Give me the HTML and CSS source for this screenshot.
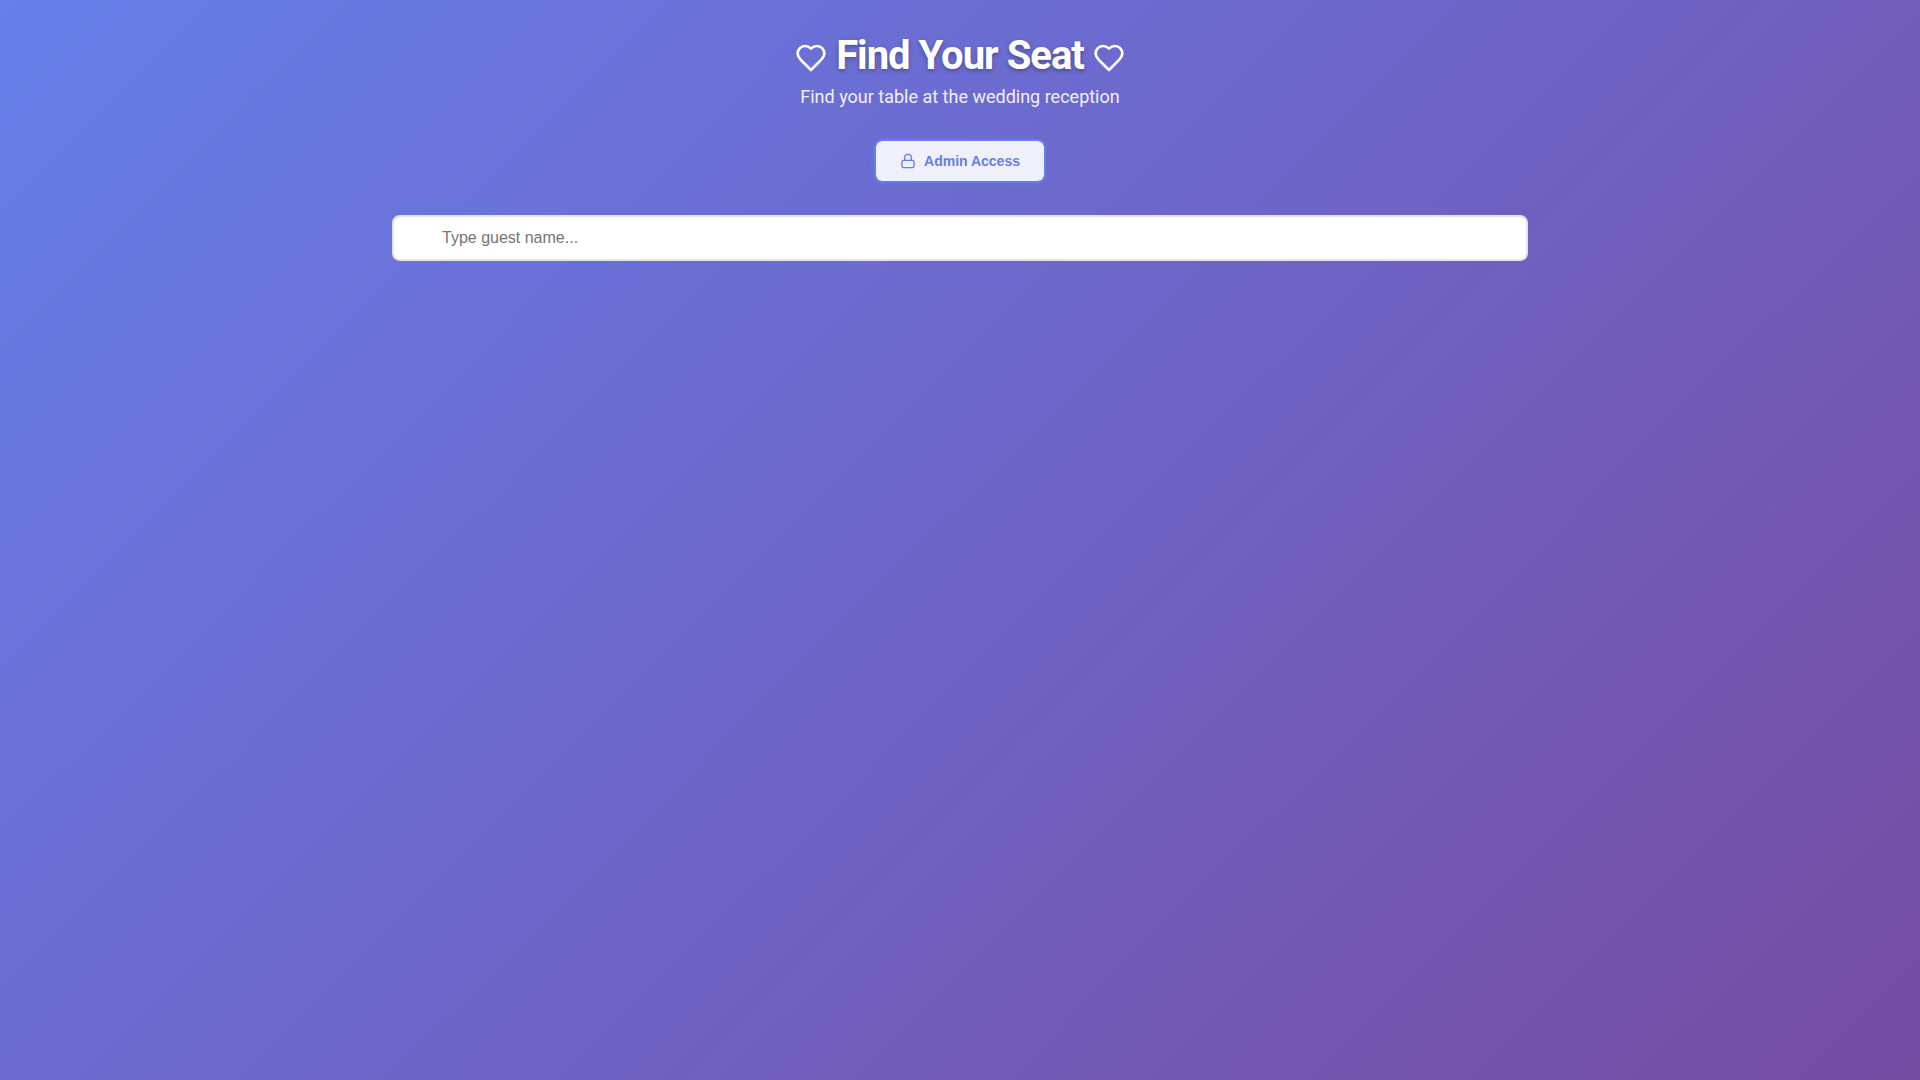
FILE: index.html
```html
<!DOCTYPE html>
<html lang="en">
<head>
<meta charset="utf-8">
<meta name="viewport" content="width=device-width, initial-scale=1">
<title>Find Your Seat</title>
<link rel="stylesheet" href="styles.css">
</head>
<body>
<main class="container">
  <header class="header">
    <h1 class="title">
      <svg class="heart" viewBox="0 0 24 24" aria-hidden="true"><path d="M19 14c1.49-1.46 3-3.21 3-5.5A5.5 5.5 0 0 0 16.5 3c-1.76 0-3 .5-4.5 2-1.5-1.5-2.74-2-4.5-2A5.5 5.5 0 0 0 2 8.5c0 2.3 1.5 4.05 3 5.5l7 7Z"/></svg>
      Find Your Seat
      <svg class="heart" viewBox="0 0 24 24" aria-hidden="true"><path d="M19 14c1.49-1.46 3-3.21 3-5.5A5.5 5.5 0 0 0 16.5 3c-1.76 0-3 .5-4.5 2-1.5-1.5-2.74-2-4.5-2A5.5 5.5 0 0 0 2 8.5c0 2.3 1.5 4.05 3 5.5l7 7Z"/></svg>
    </h1>
    <p class="subtitle">Find your table at the wedding reception</p>
    <button class="admin" type="button">
      <svg class="lock" viewBox="0 0 24 24" aria-hidden="true"><rect x="3" y="11" width="18" height="11" rx="2"/><path d="M7 11V7a5 5 0 0 1 10 0v4"/></svg>
      Admin Access
    </button>
  </header>
  <input class="search" type="text" placeholder="Type guest name..." aria-label="Guest name">
</main>
</body>
</html>
```

FILE: styles.css
```css
* {
  box-sizing: border-box;
  margin: 0;
  padding: 0;
}

body {
  min-height: 100vh;
  font-family: Roboto, sans-serif;
  background: linear-gradient(135deg, #667eea 0%, #764ba2 100%);
}

.container {
  max-width: 1200px;
  margin: 0 auto;
  padding: 32px;
}

.header {
  display: flex;
  flex-direction: column;
  align-items: center;
  margin-bottom: 32px;
  color: #fff;
  text-align: center;
}

.title {
  margin-bottom: 8px;
  font-size: 40px;
  font-weight: 700;
  line-height: 47px;
  letter-spacing: -1px;
  text-shadow: 0 2px 4px rgba(0, 0, 0, 0.3);
}

.heart,
.lock {
  fill: none;
  stroke: currentColor;
  stroke-width: 2;
  stroke-linecap: round;
  stroke-linejoin: round;
}

.heart {
  width: 32px;
  height: 32px;
  vertical-align: middle;
}

.subtitle {
  margin-bottom: 32px;
  font-size: 18px;
  line-height: 20px;
  opacity: 0.9;
}

.admin {
  display: inline-flex;
  align-items: center;
  gap: 8px;
  padding: 12px 24px;
  border: 2px solid #667eea;
  border-radius: 8px;
  background: rgba(255, 255, 255, 0.9);
  background-clip: padding-box;
  box-shadow: 0 2px 8px rgba(102, 126, 234, 0.2);
  color: #667eea;
  font: 600 14px/16px "Liberation Sans", Arial, sans-serif;
}

.lock {
  width: 16px;
  height: 16px;
}

.search {
  display: block;
  width: 100%;
  padding: 12px 16px 12px 48px;
  border: 2px solid #e1e5e9;
  border-radius: 8px;
  background: #fff;
  font: 16px/18px "Liberation Sans", Arial, sans-serif;
}
```
